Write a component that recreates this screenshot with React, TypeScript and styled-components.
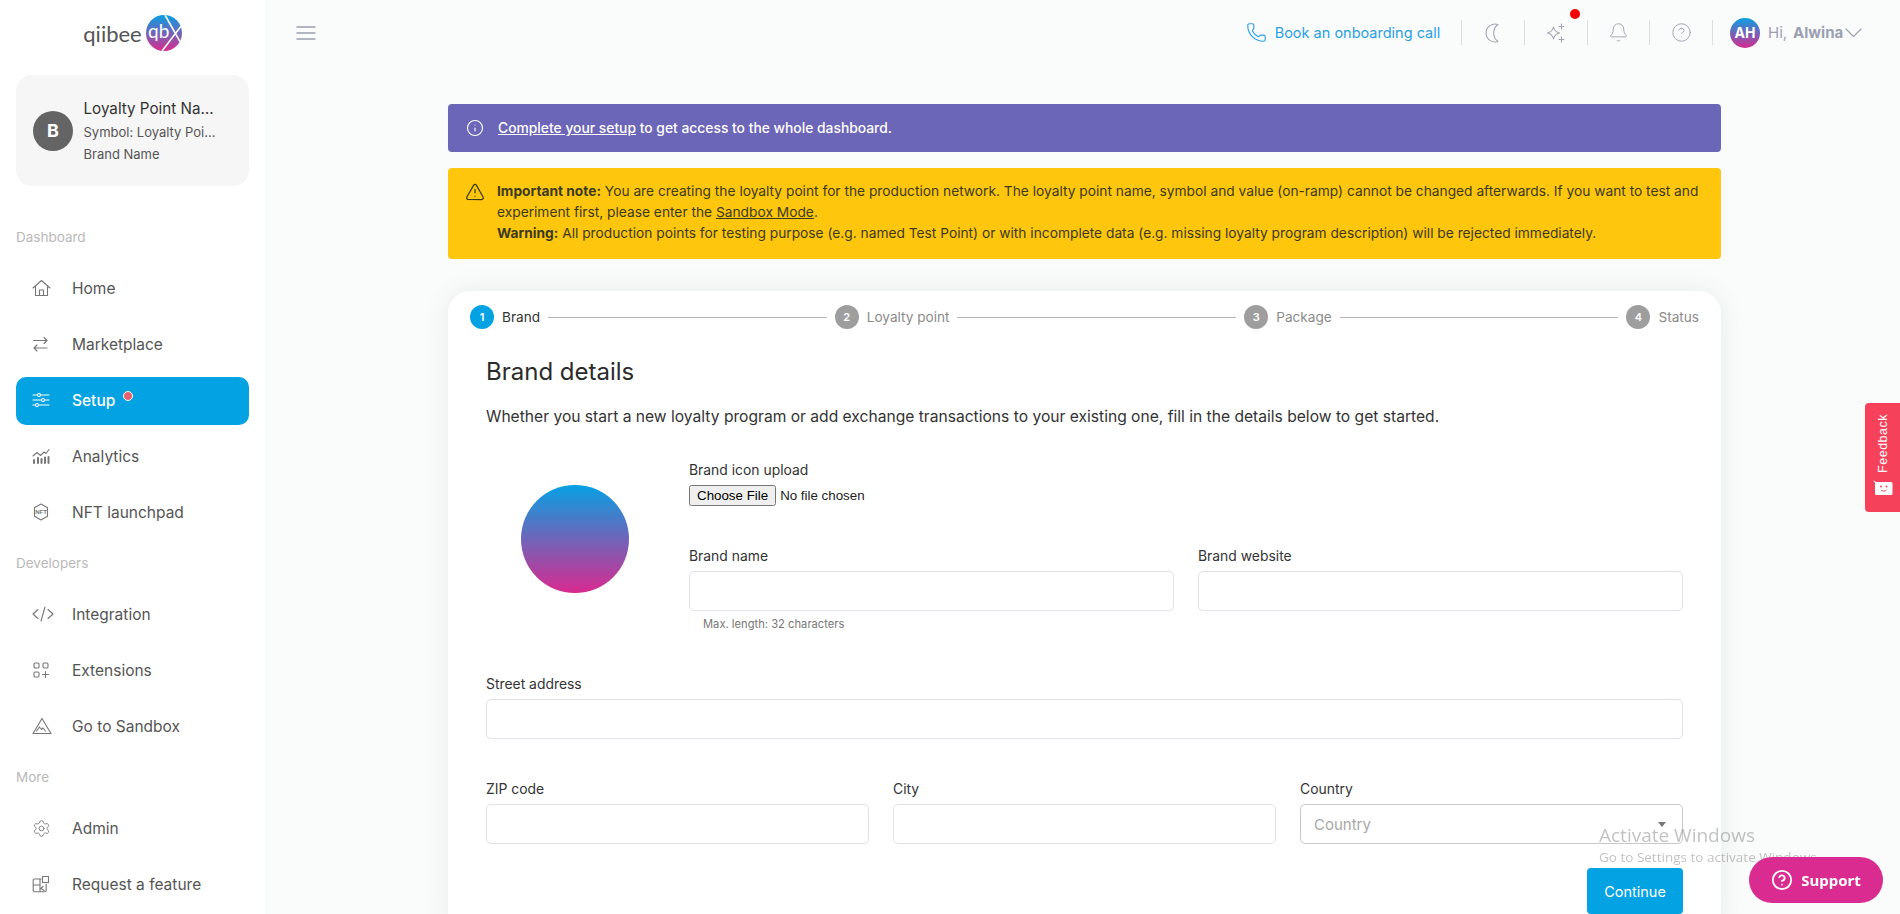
import React from "react";
import styled, { createGlobalStyle } from "styled-components";
import { Settings, Bell, CircleHelp, Phone, Info, TriangleAlert } from "lucide-react";

const FONT = `"Inter", "Liberation Sans", sans-serif`;

const Global = createGlobalStyle`
  html, body { margin: 0; height: 100%; overflow: hidden; background: #fafbfb; }
  body { font-family: ${FONT}; color: #333; }
  * { box-sizing: border-box; }
`;

const Page = styled.div`display: flex; height: 914px; overflow: hidden;`;

const Sidebar = styled.aside`
  width: 265px; flex: none; background: #fff; padding: 15px 16px 0; overflow: hidden;
`;
const LogoRow = styled.div`
  display: flex; align-items: center; justify-content: center; gap: 4px; height: 36px;
`;
const LogoWord = styled.span`
  font-family: "Lato", sans-serif; font-weight: 400; font-size: 22px; color: #555;
`;
const BrandCard = styled.div`
  margin-top: 24px; height: 111px; background: #f6f6f6; border-radius: 16px;
  display: flex; align-items: center; gap: 10.5px; padding: 0 17px;
`;
const BrandAvatar = styled.div`
  width: 40px; height: 40px; flex: none; border-radius: 50%; background: #646464; color: #fff;
  display: flex; align-items: center; justify-content: center; font-weight: 700; font-size: 18px;
`;
const BrandText = styled.div`display: flex; flex-direction: column; gap: 3px; width: 134px;`;
const BrandTitle = styled.div`
  font-size: 15.2px; line-height: 22px; color: #333; white-space: nowrap; overflow: hidden; text-overflow: ellipsis;
`;
const BrandLine = styled.div`
  font-size: 13px; line-height: 19px; color: #555; white-space: nowrap; overflow: hidden; text-overflow: ellipsis;
`;
const SectionLabel = styled.div<{ $first?: boolean }>`
  font-size: 13.5px; line-height: 52px; height: 54px; color: #b9b9b9; margin-top: ${(p) => (p.$first ? "25px" : "0")};
`;
const NavList = styled.nav`display: flex; flex-direction: column; gap: 8px;`;
const NavItem = styled.a<{ $active?: boolean }>`
  height: 48px; display: flex; align-items: center; gap: 16px; padding: 0 0 2px 16px; border-radius: 10px;
  font-size: 15.5px; color: ${(p) => (p.$active ? "#fff" : "#555")};
  background: ${(p) => (p.$active ? "#03a2e3" : "transparent")};
  font-weight: ${(p) => (p.$active ? 500 : 400)};
`;
const NavIcon = styled.span<{ $active?: boolean }>`
  width: 24px; display: flex; align-items: center; color: ${(p) => (p.$active ? "#fff" : "#777")};
`;
const NavText = styled.span`position: relative;`;
const NavDot = styled.i`
  position: absolute; left: calc(100% + 8px); top: 0; width: 10px; height: 10px; border-radius: 50%;
  background: #e8606f; border: 1px solid #fff;
`;

const Main = styled.main`flex: 1; min-width: 0; display: flex; flex-direction: column;`;
const Header = styled.header`
  height: 65px; flex: none; display: flex; align-items: center; justify-content: space-between;
  padding: 0 37px 0 31px; color: #98a0ad;
`;
const HeaderRight = styled.div`display: flex; align-items: center;`;
const BookLink = styled.a`
  display: flex; align-items: center; gap: 8px; color: #2b9fe6; font-size: 14.5px; margin-right: 21px;
`;
const IconCell = styled.div`
  position: relative; width: 62.7px; height: 25px; border-left: 1px solid #dcdfe2;
  display: flex; align-items: center; justify-content: center; color: #a0a6b6;
`;
const RedDot = styled.i`
  position: absolute; width: 10px; height: 10px; border-radius: 50%; background: #f40000; top: -11px; right: 7px;
`;
const UserBox = styled.div`
  width: 151px; height: 25px; border-left: 1px solid #dcdfe2; padding-left: 17px;
  display: flex; align-items: center; color: #9aa0b1; font-size: 15px;
`;
const UserAvatar = styled.div`
  width: 30px; height: 30px; flex: none; margin-right: 8px; border-radius: 50%; color: #fff; font-weight: 700; font-size: 14px;
  background: linear-gradient(#0a9fe2, #d62b8f); display: flex; align-items: center; justify-content: center;
`;
const UserName = styled.b`margin-left: 6px; font-weight: 700; margin-right: 2px;`;

const Content = styled.div`padding: 39px 179px 0 183px;`;
const Banner = styled.div<{ $tone: "purple" | "yellow" }>`
  display: flex; align-items: flex-start; border-radius: 4px; line-height: 21px;
  font-size: ${(p) => (p.$tone === "purple" ? "13.85px" : "13.75px")};
  background: ${(p) => (p.$tone === "purple" ? "#6c66b8" : "#fec70d")};
  color: ${(p) => (p.$tone === "purple" ? "#fff" : "#3c3a1e")};
  font-weight: ${(p) => (p.$tone === "purple" ? 500 : 400)};
  padding: ${(p) => (p.$tone === "purple" ? "14px 18px 13px" : "13px 18px 15px")};
  margin-bottom: 16px;
  a { color: inherit; text-decoration: underline; }
  b { font-weight: 700; }
`;
const BannerIcon = styled.span<{ $shift?: number }>`
  width: 32px; flex: none; display: flex; margin-left: ${(p) => p.$shift ?? 0}px; padding-top: 1px;
`;
const Card = styled.section`
  margin-top: 32px; background: #fff; border-radius: 22px 22px 0 0; box-shadow: 0 0 30px rgba(0,0,0,.07); padding: 14px 22px 0; height: 640px;
`;
const Stepper = styled.div`display: flex; align-items: center; height: 24px;`;
const StepCircle = styled.span<{ $on?: boolean }>`
  width: 24px; height: 24px; flex: none; border-radius: 50%; color: #fff; font-size: 11px; font-weight: 600;
  display: flex; align-items: center; justify-content: center; background: ${(p) => (p.$on ? "#03a2e3" : "#9e9e9e")};
`;
const StepLabel = styled.span<{ $on?: boolean }>`
  margin-left: 8px; font-size: 13.6px; white-space: nowrap; color: ${(p) => (p.$on ? "#333" : "#8b8b8b")};
`;
const StepLine = styled.span`flex: 1; height: 1px; background: #b5b5b5; margin: 0 8px;`;

const Form = styled.div`padding: 0 16px;`;
const Title = styled.h2`margin: 28px 0 0; font-size: 24px; line-height: 29px; font-weight: 400; color: #2b2b2b;`;
const Lead = styled.p`margin: 19px 0 0; font-size: 15.62px; line-height: 24px; color: #333;`;
const UploadGrid = styled.div`display: grid; grid-template-columns: 203px 1fr; margin-top: 31px;`;
const BrandCircle = styled.div`
  width: 108px; height: 108px; margin: 25px 0 0 35px; border-radius: 50%;
  background: linear-gradient(#06a0e3, #d92a8f);
`;
const FieldLabel = styled.label`display: block; font-size: 13.9px; line-height: 20px; color: #333; margin-bottom: 5px;`;
const FileInput = styled.input`display: block; margin-top: 1px; font-family: "Liberation Sans", sans-serif; font-size: 13.33px; color: #222;`;
const Cols = styled.div<{ $n: number; $top: number }>`
  display: grid; grid-template-columns: repeat(${(p) => p.$n}, 1fr); gap: 24px; margin-top: ${(p) => p.$top}px;
`;
const Field = styled.div`min-width: 0;`;
const TextInput = styled.input`
  display: block; width: 100%; height: 40px; background: #fff; border: 1px solid #dfe3e8; border-radius: 5px; outline: 0;
`;
const Helper = styled.div`margin: 5px 0 0 14px; font-size: 11.2px; line-height: 16px; color: #777;`;
const SelectWrap = styled.div`
  position: relative;
  &::after {
    content: ""; position: absolute; right: 17px; top: 18px; border: 4.5px solid transparent; border-top: 5px solid #777; border-bottom: 0;
  }
`;
const Select = styled.select`
  display: block; width: 100%; height: 40px; appearance: none; background: #fff; border: 1px solid #c9c9c9; border-radius: 5px;
  padding: 0 13px; font-family: ${FONT}; font-size: 15px; color: #a8a8a8; outline: 0;
`;
const Actions = styled.div`display: flex; justify-content: flex-end; margin-top: 24px;`;
const ContinueBtn = styled.button`
  width: 96px; height: 46px; border: 0; border-radius: 4px; background: #03a2e3; color: #fff; font-family: ${FONT}; font-size: 14.5px; font-weight: 400;
`;
const Feedback = styled.div`
  position: fixed; right: 0; top: 403px; width: 35px; height: 109px; background: #f5425a; border-radius: 4px 0 0 4px;
  display: flex; flex-direction: column; align-items: center; padding-top: 11px; gap: 7px; color: #fff;
`;
const FeedbackText = styled.span`writing-mode: vertical-rl; transform: rotate(180deg); font-family: "Liberation Sans", sans-serif; font-size: 12.5px; letter-spacing: .5px;`;
const Support = styled.button`
  position: fixed; left: 1749px; top: 857px; width: 134px; height: 46px; border: 0; border-radius: 23px; background: #da2c90; color: #fff;
  display: flex; align-items: center; justify-content: center; gap: 8px; font-family: "Noto Sans", sans-serif; font-weight: 700; font-size: 15px;
`;
const Activate = styled.div`
  position: fixed; left: 1599px; top: 823px; color: rgba(120,120,120,.45); font-family: "Open Sans", sans-serif; pointer-events: none;
`;
const ActivateTitle = styled.div`font-size: 19px; line-height: 25px;`;
const ActivateSub = styled.div`font-size: 13.5px; line-height: 20px; white-space: nowrap; margin-top: -1px;`;

const S = { fill: "none", stroke: "currentColor", strokeWidth: 1.1, strokeLinecap: "round" as const, strokeLinejoin: "round" as const };

const HomeIcon = () => (
  <svg width="19" height="18" viewBox="0 0 19 18" {...S}>
    <path d="M1 9L9.500 1.500 18 9M3.500 7V16.500h12V7M7.500 16.500v-5.500h4v5.500" />
  </svg>
);
const SwapIcon = () => (
  <svg width="17" height="16" viewBox="0 0 17 16" {...S}>
    <path d="M1.500 4.500h13.500M12 1.500l3 3-3 3M15 12H2M5 9l-3 3 3 3" />
  </svg>
);
const SlidersIcon = () => (
  <svg width="18" height="18" viewBox="0 0 18 18" {...S}>
    <path d="M1 4h4.500M8.500 4H17M1 9h8.500M12.500 9H17M1 14h2.500M6.500 14H17" />
    <circle cx="7" cy="4" r="1.500" /><circle cx="11" cy="9" r="1.500" /><circle cx="5" cy="14" r="1.500" />
  </svg>
);
const AnalyticsIcon = () => (
  <svg width="18" height="18" viewBox="0 0 18 18" {...S}>
    <path d="M1 9l4-3.500 3.500 3L12 5l2 1.500L17 2.500" />
    <path strokeWidth="2" d="M2 16v-3M6 16v-5M9.500 16v-4M13 16v-5.500M16.500 16v-6" />
  </svg>
);
const NftIcon = () => (
  <svg width="18" height="18" viewBox="0 0 18 18" {...S}>
    <path d="M9 1l6.500 3.700v8.600L9 17l-6.500-3.700V4.700z" />
    <text x="9" y="11.300" textAnchor="middle" fontSize="6" fontFamily="Liberation Sans" fill="currentColor" stroke="none" fontWeight="700">NFT</text>
  </svg>
);
const CodeIcon = () => (
  <svg width="22" height="18" viewBox="0 0 22 18" {...S}>
    <path d="M6 4.500L1 9l5 4.500M16 4.500L21 9l-5 4.500M13 2L9 16" />
  </svg>
);
const ExtIcon = () => (
  <svg width="18" height="18" viewBox="0 0 18 18" {...S}>
    <rect x="2" y="2" width="5" height="5" rx="1.200" /><rect x="11" y="2" width="5" height="5" rx="1.200" /><rect x="2" y="11" width="5" height="5" rx="1.200" />
    <path d="M13.500 10.500v6M10.500 13.500h6" />
  </svg>
);
const SandboxIcon = () => (
  <svg width="20" height="18" viewBox="0 0 20 18" {...S}>
    <path d="M10 1.500L19 16.500H1z" /><path d="M4.500 14l3-4 2 2.500 1.500-1.500 2.500 3" />
  </svg>
);
const FeatureIcon = () => (
  <svg width="18" height="18" viewBox="0 0 18 18" {...S}>
    <path d="M9 4H2.500A1.200 1.200 0 001.200 5.200v10.300a1.200 1.200 0 001.300 1.200H13a1.200 1.200 0 001.200-1.200V9" />
    <path d="M10.500 1.500h6v6h-6zM1.500 10H8M8 4v12.500M11 11.500l-2 2 3 2" />
  </svg>
);
const MenuIcon = () => (
  <svg width="20" height="16" viewBox="0 0 20 16" {...S} strokeWidth={1.3}>
    <path d="M1 2h18M1 8h18M1 14h18" />
  </svg>
);
const MoonIcon = () => (
  <svg width="16" height="20" viewBox="0 0 16 20" {...S}>
    <path d="M13 1.500A9 9 0 1 0 13 18.500 A10.500 10.500 0 0 1 13 1.500z" />
  </svg>
);
const SparkIcon = () => (
  <svg width="22" height="22" viewBox="0 0 22 22" {...S}>
    <path d="M8.500 5c.8 3.500 2.500 5.200 6 6-3.500.8-5.200 2.500-6 6-.8-3.500-2.500-5.200-6-6 3.500-.8 5.200-2.500 6-6z" />
    <path d="M16.500 2v5M14 4.500h5M16.500 15v5M14 17.500h5" />
  </svg>
);
const ChevronIcon = () => (
  <svg width="17" height="10" viewBox="0 0 17 10" {...S}>
    <path d="M1 1l7.500 7.500L16 1" />
  </svg>
);
const FeedbackFace = () => (
  <svg width="20" height="15" viewBox="0 0 20 15">
    <path d="M0 0l3 2h15a1.500 1.500 0 011.500 1.500V13.500A1.500 1.500 0 0118 15H3.500A1.500 1.500 0 012 13.500V3z" fill="#fff" />
    <circle cx="8" cy="6.500" r="1" fill="#f5425a" /><circle cx="13.500" cy="6.500" r="1" fill="#f5425a" />
    <path d="M8 10c1.500 1.500 4 1.500 5.500 0" stroke="#f5425a" fill="none" />
  </svg>
);
const LogoMark = () => (
  <svg width="36" height="36" viewBox="0 0 36 36">
    <defs>
      <linearGradient id="lg" x1="0" y1="0" x2="0" y2="1"><stop offset="0" stopColor="#06a0e3" /><stop offset="1" stopColor="#d92a8f" /></linearGradient>
      <clipPath id="lc"><circle cx="18" cy="18" r="18" /></clipPath>
    </defs>
    <circle cx="18" cy="18" r="18" fill="url(#lg)" />
    <text x="2" y="23" fontFamily="Lato" fontSize="19" fill="#fff">qb</text>
    <g clipPath="url(#lc)" stroke="#fff" strokeWidth="1.600"><path d="M19 0L36 30M36 10L16 36" /></g>
  </svg>
);

type NavDef = { label: string; icon: React.ReactNode; active?: boolean; dot?: boolean };
const groups: { title: string; items: NavDef[] }[] = [
  { title: "Dashboard", items: [
    { label: "Home", icon: <HomeIcon /> },
    { label: "Marketplace", icon: <SwapIcon /> },
    { label: "Setup", icon: <SlidersIcon />, active: true, dot: true },
    { label: "Analytics", icon: <AnalyticsIcon /> },
    { label: "NFT launchpad", icon: <NftIcon /> },
  ]},
  { title: "Developers", items: [
    { label: "Integration", icon: <CodeIcon /> },
    { label: "Extensions", icon: <ExtIcon /> },
    { label: "Go to Sandbox", icon: <SandboxIcon /> },
  ]},
  { title: "More", items: [
    { label: "Admin", icon: <Settings size={19} strokeWidth={1.1} /> },
    { label: "Request a feature", icon: <FeatureIcon /> },
  ]},
];

export default function App() {
  return (
    <>
      <Global />
      <Page>
        <Sidebar>
          <LogoRow><LogoWord>qiibee</LogoWord><LogoMark /></LogoRow>
          <BrandCard>
            <BrandAvatar>B</BrandAvatar>
            <BrandText>
              <BrandTitle>Loyalty Point Name</BrandTitle>
              <BrandLine>Symbol: Loyalty Point Name</BrandLine>
              <BrandLine>Brand Name</BrandLine>
            </BrandText>
          </BrandCard>
          {groups.map((g, i) => (
            <React.Fragment key={g.title}>
              <SectionLabel $first={i === 0}>{g.title}</SectionLabel>
              <NavList>
                {g.items.map((it) => (
                  <NavItem key={it.label} $active={it.active}>
                    <NavIcon $active={it.active}>{it.icon}</NavIcon>
                    <NavText>{it.label}{it.dot && <NavDot />}</NavText>
                  </NavItem>
                ))}
              </NavList>
            </React.Fragment>
          ))}
        </Sidebar>
        <Main>
          <Header>
            <MenuIcon />
            <HeaderRight>
              <BookLink><Phone size={21} strokeWidth={1.3} />Book an onboarding call</BookLink>
              <IconCell><MoonIcon /></IconCell>
              <IconCell><SparkIcon /><RedDot /></IconCell>
              <IconCell><Bell size={21} strokeWidth={1.1} /></IconCell>
              <IconCell><CircleHelp size={21} strokeWidth={1.1} /></IconCell>
              <UserBox>
                <UserAvatar>AH</UserAvatar>Hi, <UserName>Alwina</UserName><ChevronIcon />
              </UserBox>
            </HeaderRight>
          </Header>
          <Content>
            <Banner $tone="purple">
              <BannerIcon><Info size={18} strokeWidth={1.5} /></BannerIcon>
              <span><a>Complete your setup</a> to get access to the whole dashboard.</span>
            </Banner>
            <Banner $tone="yellow">
              <BannerIcon $shift={-1}><TriangleAlert size={20} strokeWidth={1.5} /></BannerIcon>
              <span>
                <b>Important note:</b> You are creating the loyalty point for the production network. The loyalty point name, symbol and value (on-ramp) cannot be changed afterwards. If you want to test and experiment first, please enter the <a>Sandbox Mode</a>.<br />
                <b>Warning:</b> All production points for testing purpose (e.g. named Test Point) or with incomplete data (e.g. missing loyalty program description) will be rejected immediately.
              </span>
            </Banner>
            <Card>
              <Stepper>
                <StepCircle $on>1</StepCircle><StepLabel $on>Brand</StepLabel><StepLine />
                <StepCircle>2</StepCircle><StepLabel>Loyalty point</StepLabel><StepLine />
                <StepCircle>3</StepCircle><StepLabel>Package</StepLabel><StepLine />
                <StepCircle>4</StepCircle><StepLabel>Status</StepLabel>
              </Stepper>
              <Form>
                <Title>Brand details</Title>
                <Lead>Whether you start a new loyalty program or add exchange transactions to your existing one, fill in the details below to get started.</Lead>
                <UploadGrid>
                  <BrandCircle />
                  <div>
                    <FieldLabel>Brand icon upload</FieldLabel>
                    <FileInput type="file" />
                    <Cols $n={2} $top={40}>
                      <Field><FieldLabel>Brand name</FieldLabel><TextInput /><Helper>Max. length: 32 characters</Helper></Field>
                      <Field><FieldLabel>Brand website</FieldLabel><TextInput /></Field>
                    </Cols>
                  </div>
                </UploadGrid>
                <Cols $n={1} $top={42}>
                  <Field><FieldLabel>Street address</FieldLabel><TextInput /></Field>
                </Cols>
                <Cols $n={3} $top={40}>
                  <Field><FieldLabel>ZIP code</FieldLabel><TextInput /></Field>
                  <Field><FieldLabel>City</FieldLabel><TextInput /></Field>
                  <Field><FieldLabel>Country</FieldLabel><SelectWrap><Select defaultValue=""><option value="">Country</option></Select></SelectWrap></Field>
                </Cols>
                <Actions><ContinueBtn>Continue</ContinueBtn></Actions>
              </Form>
            </Card>
          </Content>
        </Main>
      </Page>
      <Feedback><FeedbackText>Feedback</FeedbackText><FeedbackFace /></Feedback>
      <Activate><ActivateTitle>Activate Windows</ActivateTitle><ActivateSub>Go to Settings to activate Windows.</ActivateSub></Activate>
      <Support><CircleHelp size={22} strokeWidth={2} />Support</Support>
    </>
  );
}
